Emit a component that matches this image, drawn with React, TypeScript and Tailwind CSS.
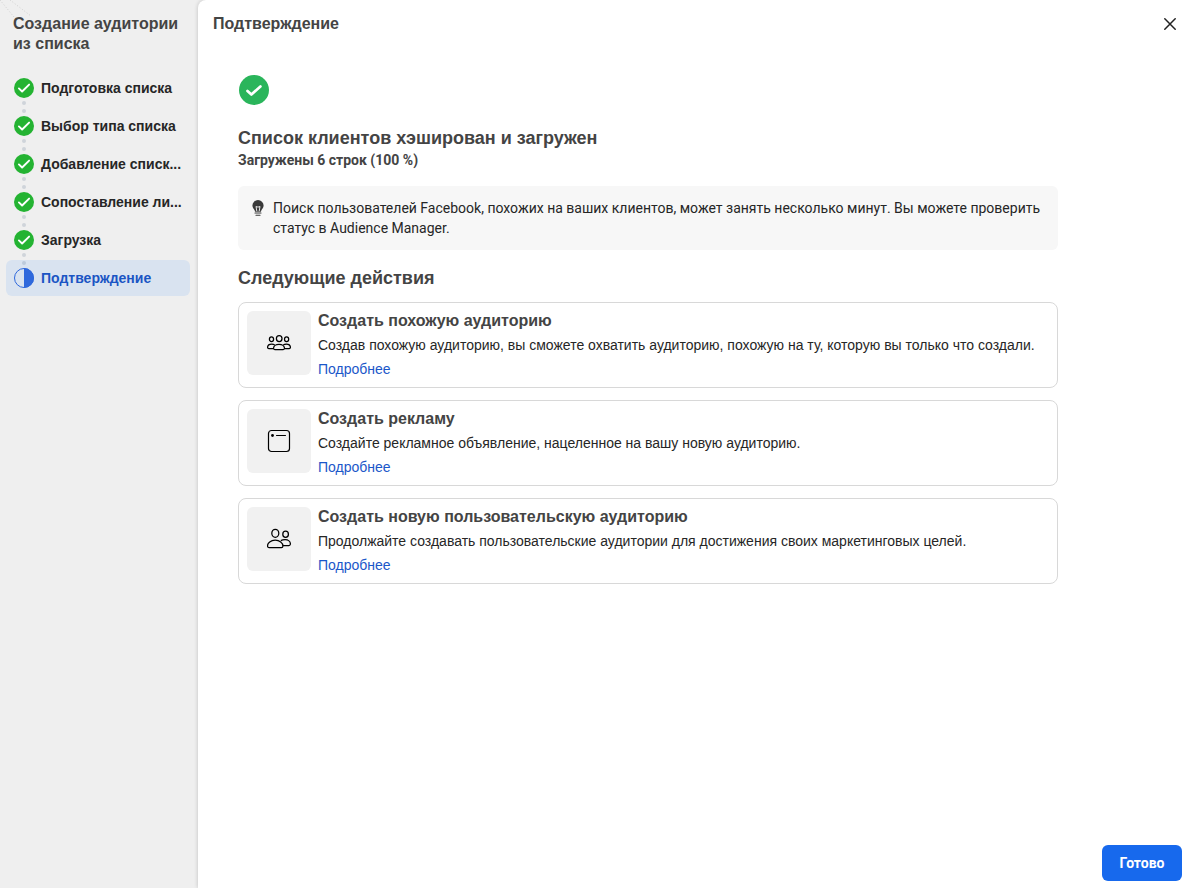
import React from "react";

type Step = { label: string; done: boolean };

const steps: Step[] = [
  { label: "Подготовка списка", done: true },
  { label: "Выбор типа списка", done: true },
  { label: "Добавление списк...", done: true },
  { label: "Сопоставление ли...", done: true },
  { label: "Загрузка", done: true },
  { label: "Подтверждение", done: false },
];

function StepDoneIcon() {
  return (
    <svg viewBox="0 0 20 20" className="size-5" aria-hidden="true">
      <circle cx="10" cy="10" r="10" fill="#24b332" />
      <path d="M4.900 10.400l3.200 3.100 7-6.900" fill="none" stroke="#fff" strokeWidth="1.900" strokeLinecap="round" strokeLinejoin="round" />
    </svg>
  );
}

function StepCurrentIcon() {
  return (
    <svg viewBox="0 0 20 20" className="size-5" aria-hidden="true">
      <circle cx="10" cy="10" r="9.500" fill="none" stroke="#2e68dc" />
      <path d="M10 0a10 10 0 0 1 0 20z" fill="#2e68dc" />
    </svg>
  );
}

function SuccessIcon() {
  return (
    <svg viewBox="0 0 30 30" className="ml-px size-[30px]" aria-hidden="true">
      <circle cx="15" cy="15" r="15" fill="#2ab55b" />
      <path d="M8.500 15.900l3.900 3.600 9-8" fill="none" stroke="#fff" strokeWidth="2.700" strokeLinecap="round" strokeLinejoin="round" />
    </svg>
  );
}

function BulbIcon() {
  return (
    <svg viewBox="0 0 12 16" className="mt-0.5 h-4 w-3 shrink-0" aria-hidden="true">
      <path d="M6 0a5.600 5.600 0 0 0-5.600 5.600c0 2.300 1.500 3.500 2.300 4.800.2.400.3.900.3 1.300h6c0-.4.1-.9.3-1.300.8-1.300 2.300-2.500 2.300-4.800A5.600 5.600 0 0 0 6 0z" fill="#3a3a3a" />
      <path d="M4.800 11.200L4 6.400l1.300.9.7-.9.7.9 1.300-.9-.8 4.800" fill="none" stroke="#f7f7f7" strokeWidth="0.9" />
      <path d="M3 13h6M4 15.200h4" stroke="#3a3a3a" strokeWidth="1.100" strokeLinecap="round" />
    </svg>
  );
}

function GroupIcon() {
  return (
    <svg viewBox="0 0 24 24" className="size-6" fill="none" stroke="#000" strokeWidth="1.250" strokeLinejoin="round" aria-hidden="true">
      <ellipse cx="12.200" cy="7.600" rx="2.800" ry="3.100" />
      <ellipse cx="4.500" cy="8.200" rx="2.100" ry="2.400" />
      <ellipse cx="19.600" cy="8.200" rx="2.100" ry="2.400" />
      <path d="M7.800 18.500c-.8 0-1.300-.4-1.300-1.200 0-2.300 2.300-4 5.500-4s5.500 1.700 5.500 4c0 .8-.5 1.200-1.300 1.200z" />
      <path d="M6.500 17.500H1.800c-.8 0-1.200-.4-1.200-1.100 0-2 1.700-3.400 4.100-3.400 1.200 0 2.200.3 3 .9M17.500 17.500h4.700c.8 0 1.200-.4 1.200-1.100 0-2-1.700-3.400-4.100-3.400-1.200 0-2.200.3-3 .9" />
    </svg>
  );
}

function WindowIcon() {
  return (
    <svg viewBox="0 0 24 24" className="size-6" fill="none" stroke="#000" aria-hidden="true">
      <rect x="1.500" y="1.500" width="21" height="21" rx="3" strokeWidth="1.200" />
      <path d="M9.500 6.500h9" strokeLinecap="round" />
      <circle cx="5.500" cy="6.500" r="1.400" fill="#000" stroke="none" />
    </svg>
  );
}

function PeopleIcon() {
  return (
    <svg viewBox="0 0 24 24" className="size-6" fill="none" stroke="#000" strokeWidth="1.250" strokeLinejoin="round" aria-hidden="true">
      <ellipse cx="8.300" cy="6.300" rx="3.500" ry="4" />
      <ellipse cx="18.600" cy="7.200" rx="2.800" ry="3.100" />
      <path d="M2 20.500c-1 0-1.500-.6-1.500-1.600 0-3.100 3.300-5.700 7.700-5.700s7.700 2.600 7.700 5.700c0 1-.5 1.600-1.500 1.600z" />
      <path d="M13.800 13.600c1.200-.6 2.700-.9 4.300-.9 3.100 0 5.300 1.800 5.300 4.200 0 1-.5 1.600-1.500 1.600h-6" />
    </svg>
  );
}

const actions = [
  {
    title: "Создать похожую аудиторию",
    text: "Создав похожую аудиторию, вы сможете охватить аудиторию, похожую на ту, которую вы только что создали.",
    icon: <GroupIcon />,
  },
  {
    title: "Создать рекламу",
    text: "Создайте рекламное объявление, нацеленное на вашу новую аудиторию.",
    icon: <WindowIcon />,
  },
  {
    title: "Создать новую пользовательскую аудиторию",
    text: "Продолжайте создавать пользовательские аудитории для достижения своих маркетинговых целей.",
    icon: <PeopleIcon />,
  },
];

function Sidebar() {
  return (
    <aside className="relative w-[198px] shrink-0 bg-[#efefef]">
      <svg viewBox="0 0 32 20" className="absolute left-0 top-0 h-5 w-8" stroke="#d0d0d0" strokeDasharray="1 2" aria-hidden="true">
        <path d="M0 0l14 17M10 0l21 16" />
      </svg>
      <h2 className="relative pl-[13px] pr-3 pt-3.5 text-base leading-5 font-bold text-[#444]">
        Создание аудитории из списка
      </h2>
      <ol className="mt-4 flex flex-col gap-0.5 pl-1.5 pr-2">
        {steps.map((step, i) => (
          <li key={step.label} className="relative">
            {i > 0 && (
              <span className="absolute -top-[7px] left-4 z-10 flex flex-col gap-1" aria-hidden="true">
                <span className="size-1 rounded-full bg-[#1c3c64]/15" />
                <span className="size-1 rounded-full bg-[#1c3c64]/15" />
              </span>
            )}
            <a
              href="#"
              aria-current={step.done ? undefined : "step"}
              className={
                step.done
                  ? "flex h-9 items-center gap-[7px] rounded-md pl-2 text-[#262626]"
                  : "flex h-9 items-center gap-[7px] rounded-md bg-[#d9e3f0] pl-2 text-[#1b55c4]"
              }
            >
              <span className="shrink-0">{step.done ? <StepDoneIcon /> : <StepCurrentIcon />}</span>
              <span className="whitespace-nowrap text-sm leading-5 font-bold">{step.label}</span>
            </a>
          </li>
        ))}
      </ol>
    </aside>
  );
}

export default function App() {
  return (
    <div className="flex min-h-screen bg-[#efefef] font-['Liberation_Sans',Arial,sans-serif] text-[#262626]">
      <Sidebar />
      <main className="relative flex min-w-0 flex-1 flex-col rounded-tl-lg bg-white shadow-[0_0_4px_rgba(0,0,0,0.2)]">
        <header className="flex items-center justify-between pl-[15px] pr-3 pt-3">
          <h1 className="text-base leading-6 font-bold text-[#444]">Подтверждение</h1>
          <button type="button" aria-label="Закрыть" className="flex size-5 items-center justify-center">
            <svg viewBox="0 0 12 12" className="size-3" stroke="#222" strokeWidth="1.500" strokeLinecap="round" aria-hidden="true">
              <path d="M.8.8l10.400 10.400M11.200.8L.8 11.200" />
            </svg>
          </button>
        </header>

        <div className="w-full max-w-[900px] flex-1 px-10 pt-[39px]">
          <SuccessIcon />
          <h2 className="mt-[21px] text-lg leading-6 font-bold text-[#444]">Список клиентов хэширован и загружен</h2>
          <p className="font-['Roboto',sans-serif] text-sm leading-5 font-bold text-[#444]">Загружены 6 строк (100 %)</p>

          <div className="mt-4 flex gap-[9px] rounded-md bg-[#f7f7f7] px-3.5 py-3">
            <BulbIcon />
            <p className="font-['Roboto',sans-serif] text-sm leading-5">
              Поиск пользователей Facebook, похожих на ваших клиентов, может занять несколько минут. Вы можете проверить
              статус в Audience Manager.
            </p>
          </div>

          <h2 className="mt-4 text-lg leading-6 font-bold text-[#444]">Следующие действия</h2>
          <div className="mt-3 flex flex-col gap-3">
            {actions.map((action) => (
              <article key={action.title} className="flex gap-[7px] rounded-lg border border-[#d8d8d8] p-2">
                <div className="flex size-16 shrink-0 items-center justify-center rounded-md bg-[#f1f1f1]">{action.icon}</div>
                <div className="flex flex-col items-start gap-1">
                  <h3 className="text-base leading-5 font-bold text-[#444]">{action.title}</h3>
                  <p className="text-sm leading-5">{action.text}</p>
                  <a href="#" className="text-sm leading-5 text-[#1b57c9]">
                    Подробнее
                  </a>
                </div>
              </article>
            ))}
          </div>
        </div>

        <footer className="flex justify-end px-2.5 pb-[7px] pt-4">
          <button
            type="button"
            className="h-9 min-w-20 rounded-md bg-[#1769ed] px-4 font-['Roboto',sans-serif] text-sm font-bold text-white"
          >
            Готово
          </button>
        </footer>
      </main>
    </div>
  );
}
